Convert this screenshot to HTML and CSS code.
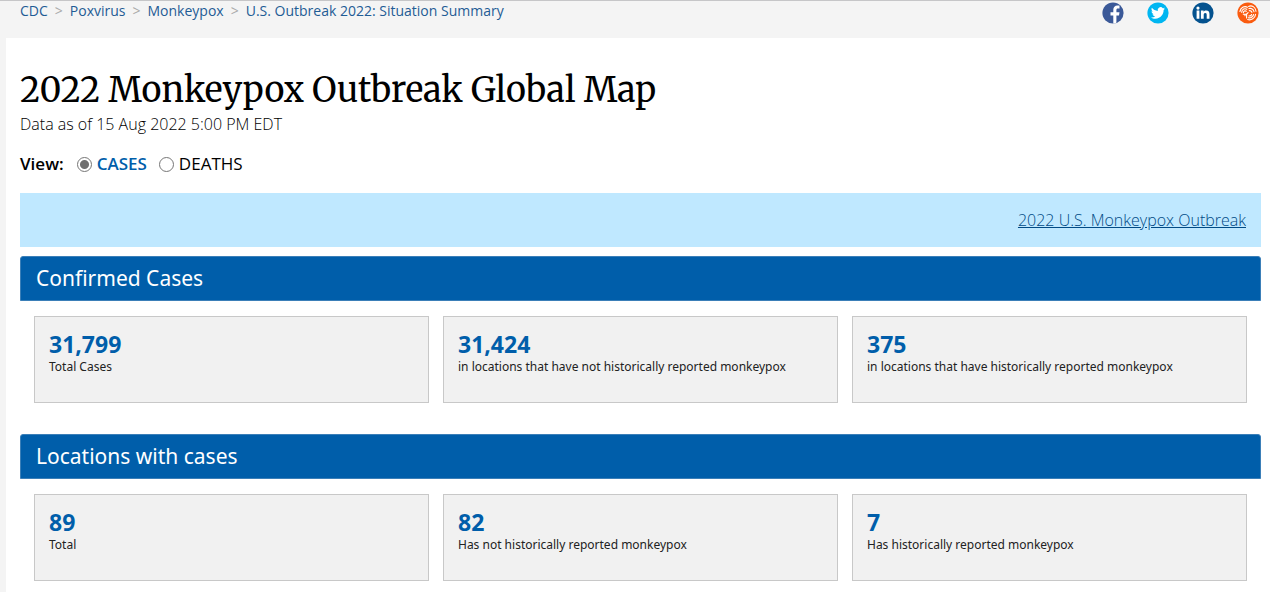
FILE: index.html
```html
<!DOCTYPE html>
<html lang="en">
<head>
<meta charset="utf-8">
<title>2022 Monkeypox Outbreak Global Map</title>
<link rel="stylesheet" href="styles.css">
</head>
<body>
<header class="topbar">
  <nav class="breadcrumb" aria-label="Breadcrumb">
    <a href="#">CDC</a><span class="sep">&gt;</span>
    <a href="#">Poxvirus</a><span class="sep">&gt;</span>
    <a href="#">Monkeypox</a><span class="sep">&gt;</span>
    <a href="#">U.S. Outbreak 2022: Situation Summary</a>
  </nav>
  <div class="social">
    <a href="#" aria-label="Facebook"><svg viewBox="0 0 22 22"><circle cx="11" cy="11" r="10.6" fill="#3b5998"/><path fill="#fff" d="M11.3 21.4v-8H8.5v-3.2h2.8V7.8c0-2.7 1.6-4.3 4.1-4.3.9 0 1.7.1 2.1.1v2.8h-1.6c-1.2 0-1.5.6-1.5 1.5v2.3h3.1l-.5 3.2h-2.6v7.3a10.6 10.6 0 0 1-3.1.7z"/></svg></a>
    <a href="#" aria-label="Twitter"><svg viewBox="0 0 22 22"><circle cx="11" cy="11" r="10.6" fill="#00b6f1"/><path fill="#fff" d="M18 6.500c-.5.200-1 .4-1.600.5.600-.4 1-.9 1.200-1.500-.5.300-1.200.6-1.800.7a2.900 2.900 0 0 0-5 2.700c-2.400-.1-4.500-1.300-5.900-3.100-.8 1.300-.4 3 .9 3.900-.5 0-.9-.1-1.300-.4 0 1.400 1 2.600 2.300 2.900-.4.100-.9.100-1.300 0 .4 1.200 1.500 2 2.700 2a5.900 5.900 0 0 1-4.300 1.200c1.300.8 2.800 1.300 4.400 1.300 5.400 0 8.500-4.500 8.300-8.600.6-.4 1.100-1 1.400-1.600z"/></svg></a>
    <a href="#" aria-label="LinkedIn"><svg viewBox="0 0 22 22"><circle cx="11" cy="11" r="10.6" fill="#04528f"/><g fill="#fff"><circle cx="6" cy="6.1" r="1.6"/><path d="M4.6 8.600h2.800v8.200H4.600zM8.900 8.600h2.700v1.100c.5-.8 1.400-1.300 2.500-1.300 2.700 0 3.400 1.600 3.400 4v4.400h-2.800v-3.900c0-1.100-.2-2-1.400-2s-1.600.9-1.600 2v3.900H8.900z"/></g></svg></a>
    <a href="#" aria-label="Syndicate"><svg viewBox="0 0 22 22"><circle cx="11" cy="11" r="10.6" fill="#fa5b0f"/><g fill="none" stroke="#fff" stroke-width="1.1" stroke-linecap="round"><path d="M2.900 9.500C4 4.800 8 3.700 10.400 5.300M4.600 10.300c.5-3.200 3.300-4.300 5.200-3M6.300 10.800c.3-1.700 1.700-2.400 3-1.500"/><path d="M11.600 4.400c3.100-1.600 7 .6 7.400 4.900M12 6.600c2.200-.8 4.700.6 5 3.100M12.200 8.700c1.200-.3 2.500.4 2.700 1.700"/><path d="M18.600 12.300c-.4 3.800-4.500 6.500-7.900 5.200M16.600 12.500c-.6 2.400-3 4-5.200 3.200M14.600 12.500c-.4 1.100-1.500 1.700-2.600 1.400"/><path d="M6.300 12.200h3.300v3.800M9.700 12l1.400-1.300M8 12.300v1.500"/></g></svg></a>
  </div>
</header>
<main class="page">
  <h1 class="title">2022 Monkeypox Outbreak Global Map</h1>
  <p class="asof">Data as of 15 Aug 2022 5:00 PM EDT</p>
  <div class="view" role="radiogroup" aria-labelledby="view-label">
    <span class="view-label" id="view-label">View:</span>
    <label class="option"><input type="radio" name="view" checked><span class="option-text">CASES</span></label>
    <label class="option"><input type="radio" name="view"><span class="option-text">DEATHS</span></label>
  </div>
  <div class="banner"><a href="#">2022 U.S. Monkeypox Outbreak</a></div>
  <section class="group">
    <h2 class="group-title">Confirmed Cases</h2>
    <div class="cards">
      <div class="card"><strong class="value">31,799</strong><span class="caption">Total Cases</span></div>
      <div class="card"><strong class="value">31,424</strong><span class="caption">in locations that have not historically reported monkeypox</span></div>
      <div class="card"><strong class="value">375</strong><span class="caption">in locations that have historically reported monkeypox</span></div>
    </div>
  </section>
  <section class="group">
    <h2 class="group-title">Locations with cases</h2>
    <div class="cards">
      <div class="card"><strong class="value">89</strong><span class="caption">Total</span></div>
      <div class="card"><strong class="value">82</strong><span class="caption">Has not historically reported monkeypox</span></div>
      <div class="card"><strong class="value">7</strong><span class="caption">Has historically reported monkeypox</span></div>
    </div>
  </section>
</main>
</body>
</html>
```
FILE: styles.css
```css
* { box-sizing: border-box; }
body {
  margin: 0;
  background: #f4f4f4;
  color: #000;
  font-family: "Open Sans", "Noto Sans", sans-serif;
}
.topbar {
  display: flex;
  justify-content: space-between;
  align-items: flex-start;
  height: 38px;
  padding: 0 11px 0 20px;
  border-top: 1px solid #c6c6c8;
}
.breadcrumb { display: flex; font-size: 14px; line-height: 20px; }
.breadcrumb a { color: #1f5c95; text-decoration: none; }
.sep { margin: 0 7px; color: #aaa; }
.social { display: flex; gap: 23px; padding-top: 1px; }
.social a, .social svg { display: block; width: 22px; height: 22px; }
.page { margin-left: 6px; padding: 28px 9px 11px 14px; background: #fff; }
.title {
  margin: 0;
  font: 400 34px/48px Merriweather, "Liberation Serif", serif;
}
.asof { margin: 0; font-size: 16px; font-weight: 300; line-height: 20px; }
.view { display: flex; align-items: center; margin-top: 18px; font-size: 17px; line-height: 24px; }
.view-label { margin-right: 13px; font-weight: 600; }
.option { display: flex; align-items: center; gap: 5px; margin-right: 12px; }
.option input {
  appearance: none;
  width: 15px;
  height: 15px;
  margin: 0;
  border: 1px solid #767676;
  border-radius: 50%;
  background: #fff;
}
.option input:checked { background: radial-gradient(circle, #707070 4px, #fff 5px); }
.option input:checked + .option-text { color: #005eaa; font-weight: 600; }
.banner {
  margin-top: 17px;
  padding: 15px;
  background: #bfe8ff;
  font-size: 16px;
  font-weight: 300;
  line-height: 24px;
  text-align: right;
}
.banner a { color: #004a85; }
.group { margin-top: 9px; }
.group + .group { margin-top: 31px; }
.group-title {
  margin: 0;
  padding: 0 15px;
  border: 1px solid #3b7fb8;
  border-radius: 3px 3px 0 0;
  background: #005eaa;
  color: #fff;
  font-family: "Noto Sans", "Open Sans", sans-serif;
  font-size: 21px;
  font-weight: 400;
  line-height: 43px;
}
.cards { display: grid; grid-template-columns: repeat(3, 1fr); gap: 14px; padding: 15px 14px 0; }
.card {
  display: flex;
  flex-direction: column;
  min-height: 87px;
  padding: 12px 14px;
  border: 1px solid #c8c8c8;
  background: #f1f1f1;
}
.value { color: #005eaa; font-size: 23px; font-weight: 700; line-height: 30px; }
.caption { color: #222; font-family: "Noto Sans", "Open Sans", sans-serif; font-size: 12px; line-height: 16px; }
```
